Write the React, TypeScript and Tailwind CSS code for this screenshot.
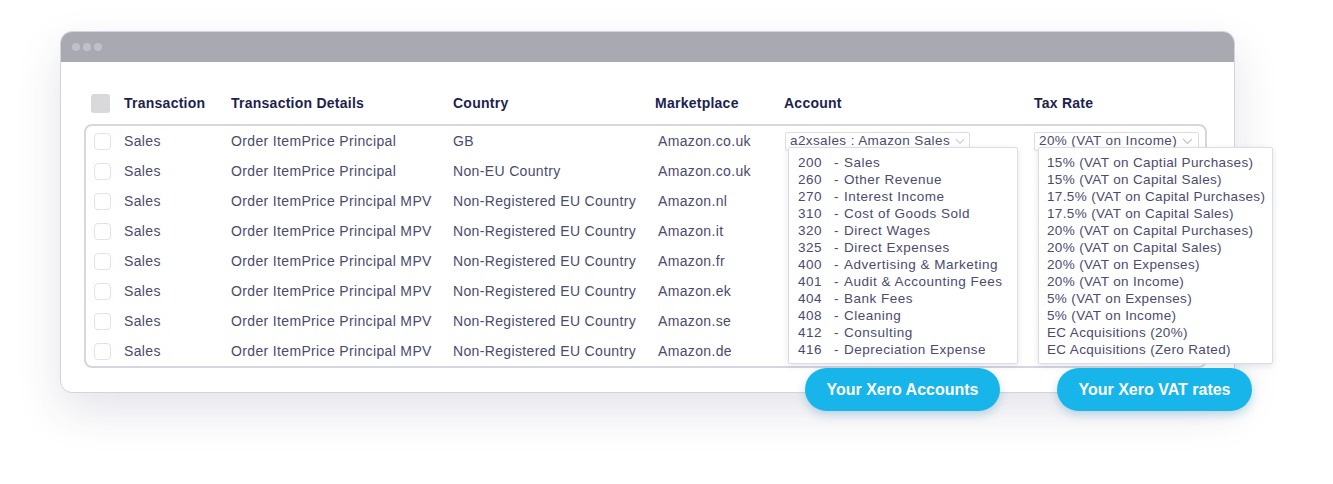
import * as React from "react"

const rows = [
  { details: "Order ItemPrice Principal", country: "GB", market: "Amazon.co.uk" },
  { details: "Order ItemPrice Principal", country: "Non-EU Country", market: "Amazon.co.uk" },
  { details: "Order ItemPrice Principal MPV", country: "Non-Registered EU Country", market: "Amazon.nl" },
  { details: "Order ItemPrice Principal MPV", country: "Non-Registered EU Country", market: "Amazon.it" },
  { details: "Order ItemPrice Principal MPV", country: "Non-Registered EU Country", market: "Amazon.fr" },
  { details: "Order ItemPrice Principal MPV", country: "Non-Registered EU Country", market: "Amazon.ek" },
  { details: "Order ItemPrice Principal MPV", country: "Non-Registered EU Country", market: "Amazon.se" },
  { details: "Order ItemPrice Principal MPV", country: "Non-Registered EU Country", market: "Amazon.de" },
]

const accounts = [
  ["200", "Sales"],
  ["260", "Other Revenue"],
  ["270", "Interest Income"],
  ["310", "Cost of Goods Sold"],
  ["320", "Direct Wages"],
  ["325", "Direct Expenses"],
  ["400", "Advertising & Marketing"],
  ["401", "Audit & Accounting Fees"],
  ["404", "Bank Fees"],
  ["408", "Cleaning"],
  ["412", "Consulting"],
  ["416", "Depreciation Expense"],
]

const taxRates = [
  "15% (VAT on Captial Purchases)",
  "15% (VAT on Capital Sales)",
  "17.5% (VAT on Capital Purchases)",
  "17.5% (VAT on Capital Sales)",
  "20% (VAT on Capital Purchases)",
  "20% (VAT on Capital Sales)",
  "20% (VAT on Expenses)",
  "20% (VAT on Income)",
  "5% (VAT on Expenses)",
  "5% (VAT on Income)",
  "EC Acquisitions (20%)",
  "EC Acquisitions (Zero Rated)",
]

function Caret() {
  return (
    <svg width="11" height="7" viewBox="0 0 11 7" className="ml-[5px]">
      <path d="M1 1l4.5 4.5L10 1" fill="none" stroke="#c4c4cf" strokeWidth="1.2" />
    </svg>
  )
}

function SelectBox({ label, width }: { label: string; width: string }) {
  return (
    <div
      className={`flex items-center h-[19px] px-[4px] border border-[#dcdce4] rounded-[2px] bg-white text-[13.5px] tracking-[0.4px] text-[#4a4b6d] ${width}`}
    >
      <span className="whitespace-nowrap">{label}</span>
      <Caret />
    </div>
  )
}

export default function App() {
  return (
    <div
      className="relative w-[1333px] h-[484px] bg-white overflow-hidden pt-[31px] pl-[60px]"
      style={{ fontFamily: '"Liberation Sans", Arial, sans-serif' }}
    >
      <div className="w-[1175px] h-[362px] rounded-[12px] border border-[#d3d3dc] bg-white shadow-[0_18px_45px_rgba(50,50,90,0.13)]">
        <div className="h-[30px] bg-[#a9a9b1] rounded-t-[11px] flex items-center gap-[3px] pl-[11px]">
          <span className="w-[8px] h-[8px] rounded-full bg-[#c0c0c7]" />
          <span className="w-[8px] h-[8px] rounded-full bg-[#c0c0c7]" />
          <span className="w-[8px] h-[8px] rounded-full bg-[#c0c0c7]" />
        </div>

        <div className="pl-[23px] pr-[27px] pt-[32px]">
          {/* header */}
          <div className="flex items-center h-[19px] pl-[7px] text-[14px] font-bold tracking-[0.25px] text-[#1e1f4f]">
            <div className="w-[33px]">
              <div className="w-[19px] h-[19px] rounded-[3px] bg-[#d9d9dc]" />
            </div>
            <div className="w-[107px]">Transaction</div>
            <div className="w-[222px]">Transaction Details</div>
            <div className="w-[202px]">Country</div>
            <div className="w-[129px]">Marketplace</div>
            <div className="w-[250px]">Account</div>
            <div>Tax Rate</div>
          </div>

          {/* body */}
          <div className="mt-[11px] border-2 border-[#d6d6e0] rounded-[8px] pl-[8px] text-[14px] tracking-[0.35px] text-[#4a4b6d]">
            {rows.map((r, i) => (
              <div key={i} className="flex items-center h-[30px]">
                <div className="w-[30px]">
                  <div className="w-[17px] h-[17px] rounded-[4px] border border-[#e2e2e8] bg-white" />
                </div>
                <div className="w-[107px]">Sales</div>
                <div className="w-[222px]">{r.details}</div>
                <div className="w-[202px]">{r.country}</div>
                <div className="w-[130px] pl-[3px]">{r.market}</div>
                {i === 0 ? (
                  <>
                    <div className="w-[249px] relative">
                      <SelectBox label="a2xsales : Amazon Sales" width="w-[185px]" />
                      <div className="absolute left-[3px] top-[15px] w-[230px] h-[217px] bg-white border border-[#dcdce4] rounded-[2px] shadow-[0_2px_6px_rgba(60,60,90,0.12)] pt-[6px] pl-[9px] text-[13.5px] tracking-[0.5px] leading-[17px] z-10">
                        {accounts.map(([code, name]) => (
                          <div key={code} className="flex whitespace-nowrap">
                            <span className="w-[36px]">{code}</span>
                            <span className="w-[10px]">-</span>
                            <span>{name}</span>
                          </div>
                        ))}
                      </div>
                    </div>
                    <div className="relative">
                      <SelectBox label="20% (VAT on Income)" width="w-[165px]" />
                      <div className="absolute left-[4px] top-[15px] w-[235px] h-[217px] bg-white border border-[#dcdce4] rounded-[2px] shadow-[0_2px_6px_rgba(60,60,90,0.12)] pt-[6px] pl-[8px] text-[13.5px] tracking-[0.35px] leading-[17px] z-10">
                        {taxRates.map((t) => (
                          <div key={t} className="whitespace-nowrap">{t}</div>
                        ))}
                      </div>
                    </div>
                  </>
                ) : null}
              </div>
            ))}
          </div>
        </div>
      </div>

      <div className="absolute left-[805px] top-[368px] w-[195px] h-[43px] rounded-full bg-[#17b5ea] shadow-[0_4px_10px_rgba(20,120,170,0.25)] flex items-center justify-center text-white font-bold text-[16px] z-20">
        Your Xero Accounts
      </div>
      <div className="absolute left-[1057px] top-[368px] w-[195px] h-[43px] rounded-full bg-[#17b5ea] shadow-[0_4px_10px_rgba(20,120,170,0.25)] flex items-center justify-center text-white font-bold text-[16px] z-20">
        Your Xero VAT rates
      </div>
    </div>
  )
}
